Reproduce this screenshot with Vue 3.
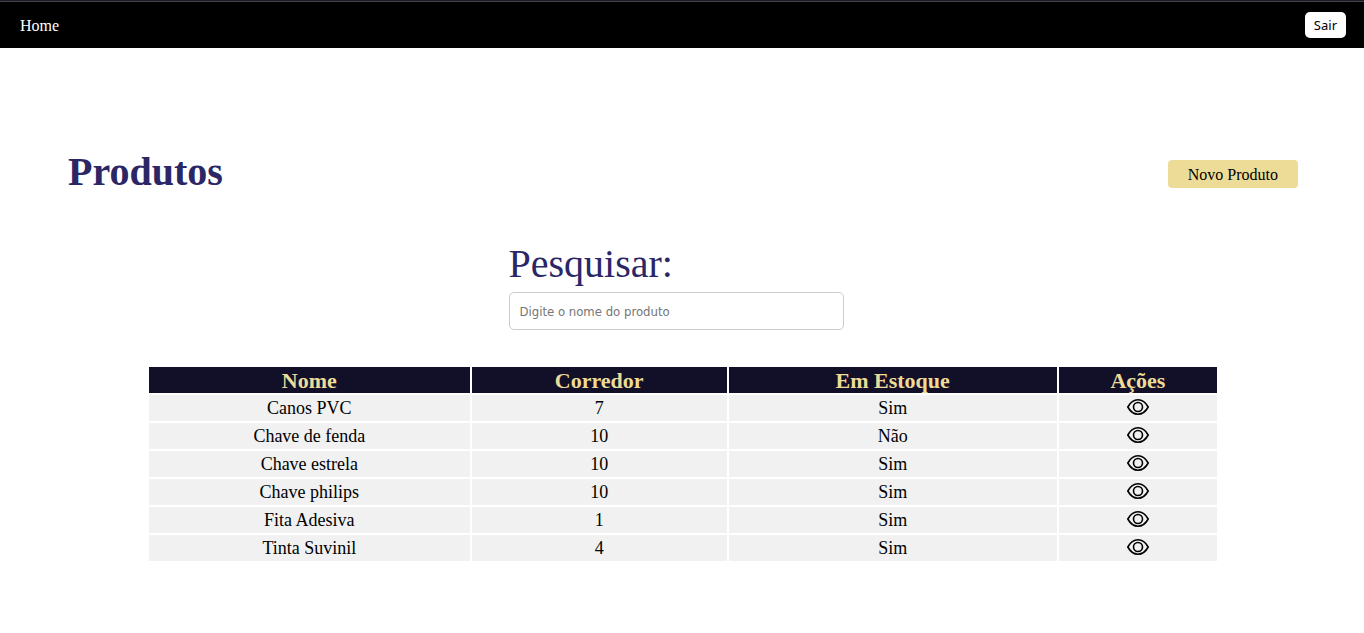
<script setup>
import { ref, computed } from 'vue'

const search = ref('')
const products = [
  { name: 'Canos PVC', aisle: 7, stock: 'Sim' },
  { name: 'Chave de fenda', aisle: 10, stock: 'Não' },
  { name: 'Chave estrela', aisle: 10, stock: 'Sim' },
  { name: 'Chave philips', aisle: 10, stock: 'Sim' },
  { name: 'Fita Adesiva', aisle: 1, stock: 'Sim' },
  { name: 'Tinta Suvinil', aisle: 4, stock: 'Sim' },
]
const filtered = computed(() =>
  products.filter((p) => p.name.toLowerCase().includes(search.value.toLowerCase()))
)
</script>

<template>
  <div class="page">
    <header class="navbar">
      <nav><a class="home" href="#">Home</a></nav>
      <button class="logout" type="button">Sair</button>
    </header>
    <main class="content">
      <div class="heading">
        <h1>Produtos</h1>
        <button class="create" type="button">Novo Produto</button>
      </div>
      <form class="search" @submit.prevent>
        <label for="search">Pesquisar:</label>
        <input id="search" v-model="search" type="text" placeholder="Digite o nome do produto" />
      </form>
      <table class="products">
        <colgroup>
          <col class="col-name" />
          <col class="col-aisle" />
          <col class="col-stock" />
          <col class="col-actions" />
        </colgroup>
        <thead>
          <tr>
            <th scope="col">Nome</th>
            <th scope="col">Corredor</th>
            <th scope="col">Em Estoque</th>
            <th scope="col">Ações</th>
          </tr>
        </thead>
        <tbody>
          <tr v-for="p in filtered" :key="p.name">
            <td>{{ p.name }}</td>
            <td>{{ p.aisle }}</td>
            <td>{{ p.stock }}</td>
            <td>
              <button class="view" type="button" :aria-label="'Ver ' + p.name">
                <svg viewBox="0 0 24 18" width="24" height="18" fill="none" stroke="currentColor" stroke-width="1.6" stroke-linejoin="round" aria-hidden="true">
                  <path d="M1.8 9C4.300 4.400 7.800 1.800 12 1.800s7.700 2.600 10.200 7.200C19.700 13.600 16.200 16.200 12 16.200S4.300 13.600 1.800 9z" />
                  <circle cx="12" cy="9" r="4.500" />
                </svg>
              </button>
            </td>
          </tr>
        </tbody>
      </table>
    </main>
  </div>
</template>

<style>
body {
  margin: 0;
  background: #fff;
}
</style>

<style scoped>
.page {
  font-family: "Liberation Serif", "Times New Roman", serif;
  font-size: 16px;
  color: #000;
}
button {
  font: inherit;
  color: inherit;
  border: 0;
  cursor: pointer;
}
.navbar {
  display: flex;
  align-items: center;
  justify-content: space-between;
  box-sizing: border-box;
  height: 48px;
  padding: 2px 18px 0 20px;
  background: linear-gradient(#1c1b22 0 1px, #42414d 1px 2px, #000 2px);
}
.home {
  display: block;
  padding-top: 2px;
  color: #fff;
  text-decoration: none;
}
.logout {
  height: 26px;
  padding: 0 9px;
  border-radius: 5px;
  background: #fff;
  font-family: "Noto Sans", sans-serif;
  font-size: 13px;
}
.content {
  padding: 101px 66px 32px 68px;
}
.heading {
  display: flex;
  align-items: center;
  justify-content: space-between;
}
h1 {
  margin: 0;
  font-size: 40px;
  line-height: 46px;
  color: #2b2766;
}
.create {
  height: 28px;
  margin-top: 4px;
  padding: 2px 20px 0;
  border-radius: 4px;
  background: #eddc98;
}
.search {
  display: flex;
  flex-direction: column;
  gap: 5px;
  width: 335px;
  margin: 46px auto 35px;
  padding-right: 14px;
}
.search label {
  font-size: 40px;
  line-height: 46px;
  color: #2b2766;
}
.search input {
  box-sizing: border-box;
  width: 100%;
  height: 38px;
  padding: 0 10px;
  border: 1px solid #ccc;
  border-radius: 5px;
  background: #fff;
  font-family: "DejaVu Sans Condensed", "DejaVu Sans", sans-serif;
  font-size: 13px;
}
.search input::placeholder {
  color: #757575;
  opacity: 1;
}
.products {
  width: calc(100% - 158px);
  margin: 0 auto;
  border-spacing: 2px;
  table-layout: fixed;
  text-align: center;
}
.col-name { width: 30.2%; }
.col-aisle { width: 24%; }
.col-stock { width: 30.9%; }
.col-actions { width: 14.9%; }
th,
td {
  height: 26px;
  padding: 0;
}
th {
  box-sizing: border-box;
  padding-top: 2px;
  background: #120f28;
  color: #eddc98;
  font-size: 22px;
  line-height: 24px;
}
td {
  background: #f1f1f1;
  font-size: 18px;
  line-height: 26px;
}
.view {
  display: flex;
  width: 24px;
  height: 26px;
  margin: 0 auto;
  padding: 3px 0 5px;
  background: none;
}
</style>
